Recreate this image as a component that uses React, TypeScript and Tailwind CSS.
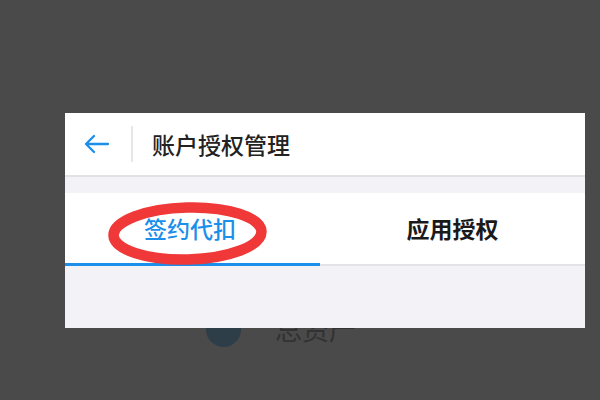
import React from 'react';

const font = { fontFamily: '"Noto Sans CJK SC", "Noto Sans", sans-serif' };

const App = () => {
  return (
    <div className="relative w-[600px] h-[400px] overflow-hidden bg-[#4a4a4a]" style={font}>
      {/* dimmed page underneath */}
      <div className="flex flex-col gap-[54px] pt-[309px] pl-[206px]">
        <div className="flex items-center gap-[34px]">
          <div className="w-[35px] h-[35px] rounded-full bg-[#2d3e49]"></div>
          <span className="text-[27px] text-[#323232]">总资产</span>
        </div>
        <div className="flex items-center gap-[34px]">
          <div className="w-[35px] h-[35px] rounded-full bg-[#2d3e49]"></div>
        </div>
      </div>

      {/* screenshot card */}
      <div className="absolute left-[65px] top-[113px] w-[520px] h-[215px] flex flex-col bg-[#f3f3f7]">
        <div className="h-[64px] flex items-center bg-white border-b-2 border-[#e2e2e6]">
          <div className="w-[66px] flex justify-center pr-[2px]">
            <svg width="26" height="20" viewBox="0 0 26 20" fill="none" stroke="#1b8fe9" strokeWidth="2.3" strokeLinecap="round" strokeLinejoin="round">
              <path d="M24 10H2M10 2L2 10l8 8" />
            </svg>
          </div>
          <div className="w-[2px] h-[36px] bg-[#e6e6e6]"></div>
          <span className="ml-[19px] text-[23px] font-medium text-[#222]">账户授权管理</span>
        </div>
        <div className="h-[16px]"></div>
        <div className="relative h-[73px] flex bg-white border-b-2 border-[#e3e3e6]">
          <div className="w-[255px] flex items-center justify-center pr-[5px] border-b-[3px] border-[#1b8fe9] -mb-[2px]">
            <span className="text-[23px] font-medium text-[#1b8fe9]">签约代扣</span>
          </div>
          <div className="flex-1 flex items-center justify-center">
            <span className="text-[23px] font-bold text-[#1a1a1a]">应用授权</span>
          </div>
          <svg className="absolute left-[42px] top-[9px]" width="162" height="64" viewBox="0 0 162 64" fill="none">
            <ellipse cx="80.5" cy="31.5" rx="74" ry="26" stroke="#f03838" strokeWidth="10.5" transform="rotate(-1.5 80.5 31.5)" />
          </svg>
        </div>
      </div>
    </div>
  );
};

export default App;
